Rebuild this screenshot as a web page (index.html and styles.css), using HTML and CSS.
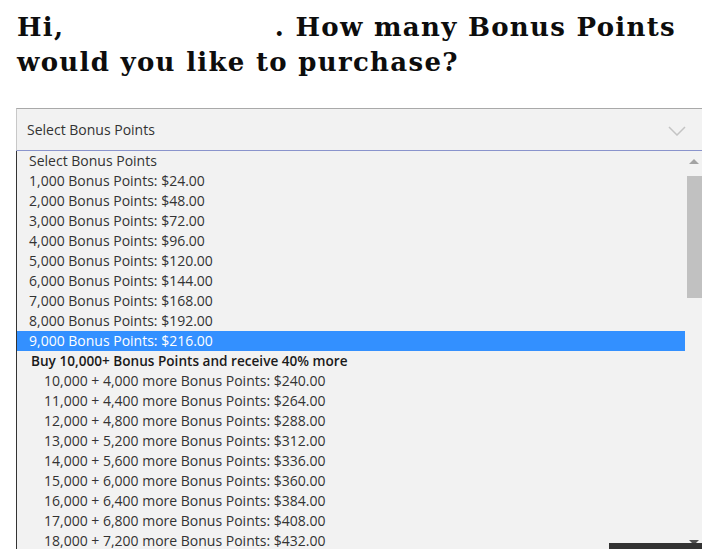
FILE: index.html
```html
<!DOCTYPE html>
<html lang="en">
<head>
  <meta charset="UTF-8" />
  <title>Buy Bonus Points</title>
  <link rel="stylesheet" href="styles.css">
</head>
<body>
  <div class="page">
    <h1 class="greeting">Hi, <span class="member-name"></span>. How many Bonus Points would you like to purchase?</h1>

    <!-- Points dropdown (open) -->
    <div class="points-select">
      <div class="select-box">
        <span class="select-value">Select Bonus Points</span>
        <svg class="chevron" width="18" height="10" viewBox="0 0 18 10">
          <path d="M1 1 L9 9 L17 1" fill="none" stroke="#c4c4c4" stroke-width="1.5"/>
        </svg>
      </div>
      <div class="select-list">
        <div class="options">
          <div class="option">Select Bonus Points</div>
          <div class="option">1,000 Bonus Points: $24.00</div>
          <div class="option">2,000 Bonus Points: $48.00</div>
          <div class="option">3,000 Bonus Points: $72.00</div>
          <div class="option">4,000 Bonus Points: $96.00</div>
          <div class="option">5,000 Bonus Points: $120.00</div>
          <div class="option">6,000 Bonus Points: $144.00</div>
          <div class="option">7,000 Bonus Points: $168.00</div>
          <div class="option">8,000 Bonus Points: $192.00</div>
          <div class="option selected">9,000 Bonus Points: $216.00</div>
          <div class="group-label">Buy 10,000+ Bonus Points and receive 40% more</div>
          <div class="option grouped">10,000 + 4,000 more Bonus Points: $240.00</div>
          <div class="option grouped">11,000 + 4,400 more Bonus Points: $264.00</div>
          <div class="option grouped">12,000 + 4,800 more Bonus Points: $288.00</div>
          <div class="option grouped">13,000 + 5,200 more Bonus Points: $312.00</div>
          <div class="option grouped">14,000 + 5,600 more Bonus Points: $336.00</div>
          <div class="option grouped">15,000 + 6,000 more Bonus Points: $360.00</div>
          <div class="option grouped">16,000 + 6,400 more Bonus Points: $384.00</div>
          <div class="option grouped">17,000 + 6,800 more Bonus Points: $408.00</div>
          <div class="option grouped">18,000 + 7,200 more Bonus Points: $432.00</div>
        </div>
        <div class="scrollbar">
          <span class="arrow up"></span>
          <div class="track"><div class="thumb"></div></div>
          <span class="arrow down"></span>
        </div>
      </div>
    </div>
  </div>
  <div class="footer-bar"></div>
</body>
</html>
```

FILE: styles.css
```css
/* Base */
body {
  margin: 0;
  background: #fff;
  color: #111;
  overflow: hidden;
  height: 549px;
  position: relative;
}
.page {
  padding: 0 0 0 16px;
}
/* Heading */
.greeting {
  font-family: "DejaVu Serif", Georgia, serif;
  font-weight: bold;
  font-size: 26px;
  line-height: 35px;
  letter-spacing: 1.3px;
  margin: 0;
  padding: 10px 0 0 1px;
  color: #0d0d0d;
  width: 684px;
}
.member-name {
  display: inline-block;
  width: 200px;
}
/* Fake select */
.points-select {
  margin-top: 28px;
  font-family: "Open Sans", sans-serif;
  font-size: 14px;
  color: #333;
}
.select-box {
  display: flex;
  align-items: center;
  justify-content: space-between;
  height: 41px;
  background: #f2f2f2;
  border-top: 1px solid #a9a9a9;
  border-left: 1px solid #c8c8c8;
  border-bottom: 1px solid #8a94cc;
  padding: 0 16px 0 10px;
}
.chevron {
  margin-top: 2px;
}
.select-list {
  display: flex;
  background: #f2f2f2;
  border-left: 1px solid #333;
  height: 400px;
}
.options {
  flex: 1;
}
.option,
.group-label {
  height: 20px;
  line-height: 20px;
  padding-left: 12px;
  white-space: nowrap;
}
.option.selected {
  background: #3390ff;
  color: #fff;
}
.group-label {
  font-weight: 600;
  font-size: 13.6px;
  color: #1a1a1a;
  padding-left: 14px;
}
.option.grouped {
  padding-left: 27px;
}
/* Scrollbar */
.scrollbar {
  width: 17px;
  display: flex;
  flex-direction: column;
  align-items: center;
  background: #f2f2f2;
}
.arrow {
  width: 0;
  height: 0;
  border-left: 5px solid transparent;
  border-right: 5px solid transparent;
}
.arrow.up {
  border-bottom: 5px solid #a3a3a3;
  margin: 8px 0 12px;
}
.arrow.down {
  border-top: 5px solid #505050;
  margin: 0 0 6px;
}
.track {
  flex: 1;
  width: 100%;
}
.thumb {
  height: 122px;
  background: #c1c1c1;
  margin-left: 2px;
}
.footer-bar {
  position: absolute;
  right: 0;
  bottom: 0;
  width: 93px;
  height: 6px;
  background: #333;
}
```
